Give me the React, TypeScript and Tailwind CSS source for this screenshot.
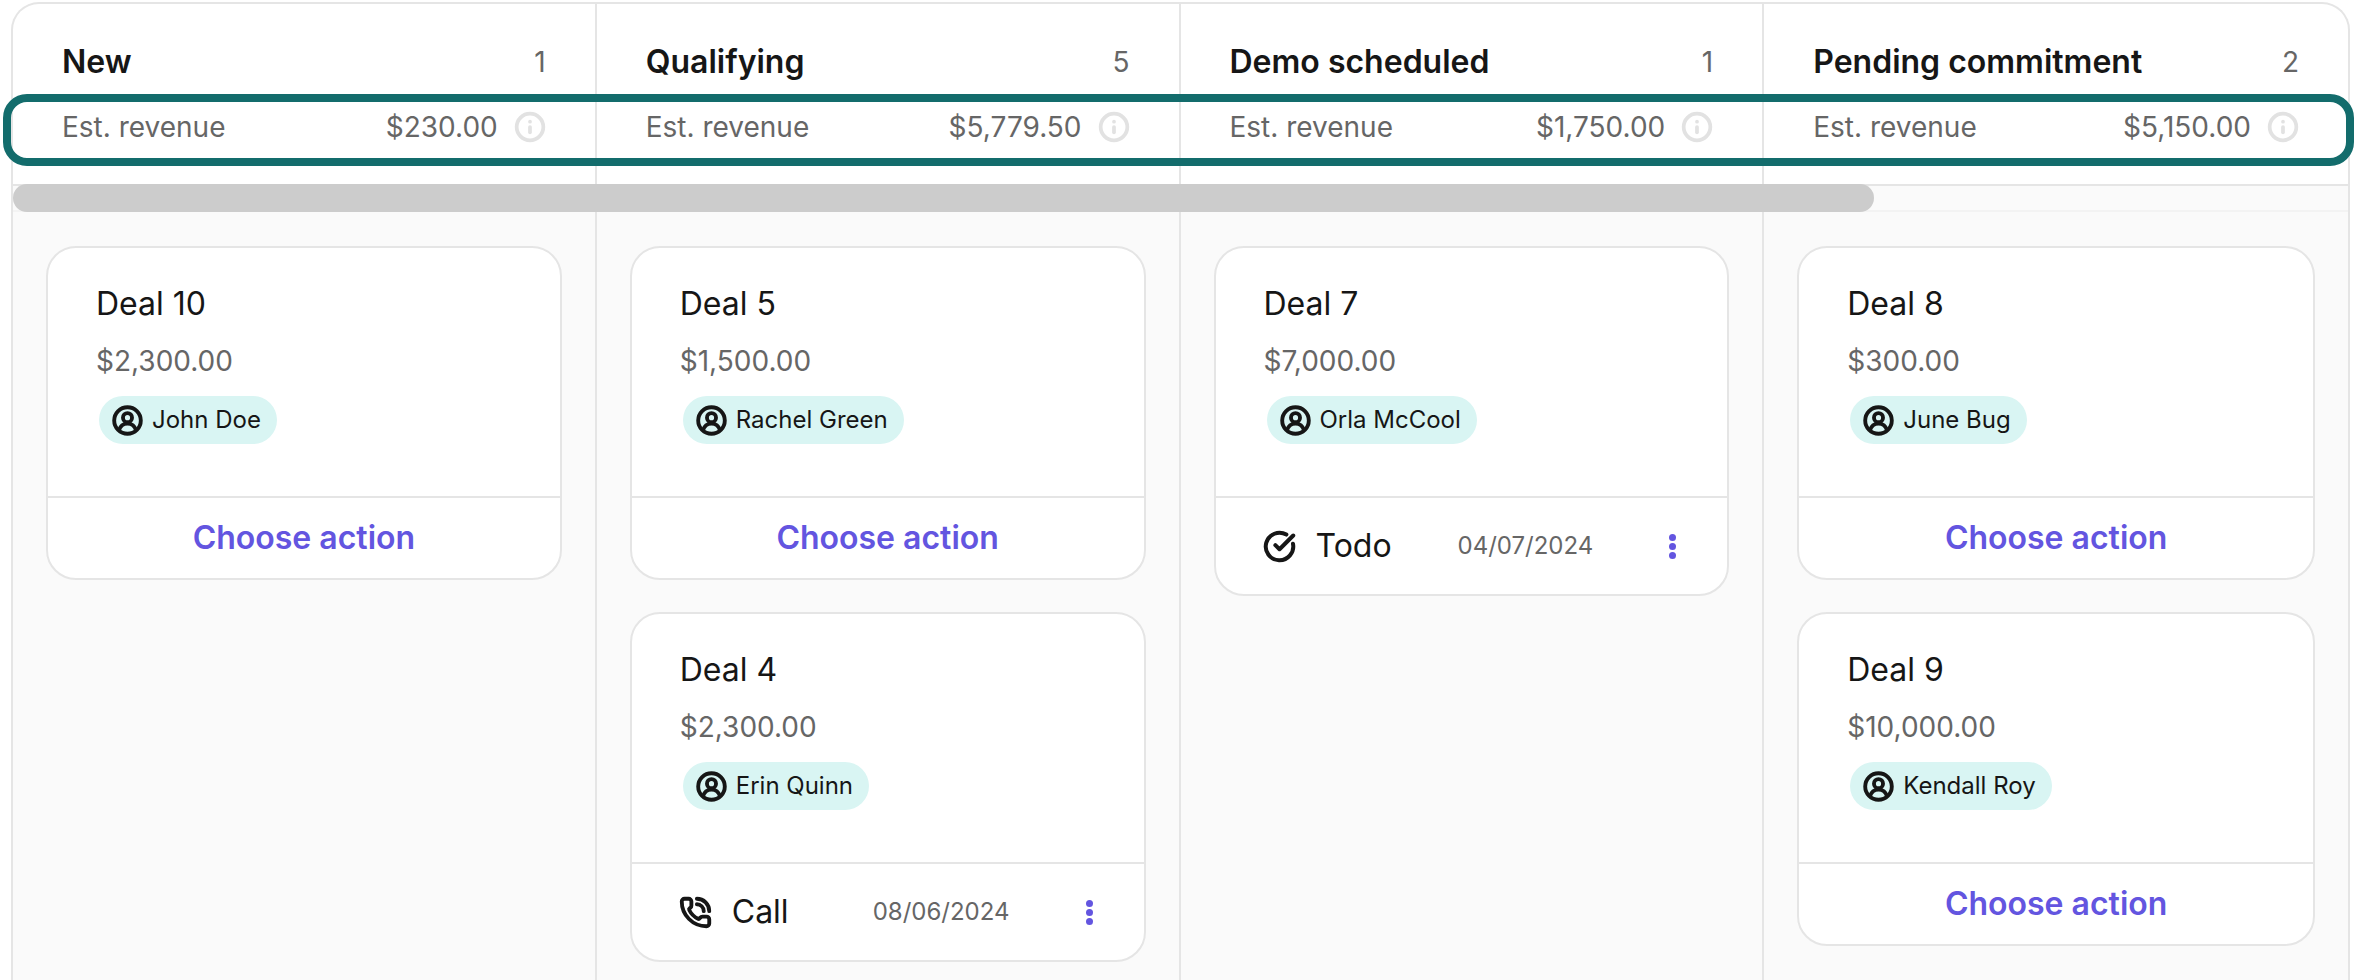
import { PhoneCall, CircleCheckBig, Info } from 'lucide-react';

interface Stage {
  name: string;
  count: number;
  revenue: string;
  deals: Deal[];
}

interface Deal {
  name: string;
  amount: string;
  owner: string;
  activity?: { kind: 'call' | 'todo'; date: string };
}

const stages: Stage[] = [
  {
    name: 'New',
    count: 1,
    revenue: '$230.00',
    deals: [{ name: 'Deal 10', amount: '$2,300.00', owner: 'John Doe' }],
  },
  {
    name: 'Qualifying',
    count: 5,
    revenue: '$5,779.50',
    deals: [
      { name: 'Deal 5', amount: '$1,500.00', owner: 'Rachel Green' },
      { name: 'Deal 4', amount: '$2,300.00', owner: 'Erin Quinn', activity: { kind: 'call', date: '08/06/2024' } },
    ],
  },
  {
    name: 'Demo scheduled',
    count: 1,
    revenue: '$1,750.00',
    deals: [{ name: 'Deal 7', amount: '$7,000.00', owner: 'Orla McCool', activity: { kind: 'todo', date: '04/07/2024' } }],
  },
  {
    name: 'Pending commitment',
    count: 2,
    revenue: '$5,150.00',
    deals: [
      { name: 'Deal 8', amount: '$300.00', owner: 'June Bug' },
      { name: 'Deal 9', amount: '$10,000.00', owner: 'Kendall Roy' },
    ],
  },
];

function UserIcon() {
  return (
    <svg width="31" height="31" viewBox="0 0 24 24" fill="none" stroke="#161616" strokeWidth="3" className="shrink-0">
      <circle cx="12" cy="12" r="10.3" />
      <circle cx="12" cy="9.8" r="3.5" />
      <path d="M5.4 19.6c.9-3 3.4-5.2 6.6-5.2s5.7 2.2 6.6 5.2" />
    </svg>
  );
}

function Dots() {
  return (
    <div className="flex flex-col gap-[2px]">
      <span className="size-[7px] rounded-full bg-[#6355e0]" />
      <span className="size-[7px] rounded-full bg-[#6355e0]" />
      <span className="size-[7px] rounded-full bg-[#6355e0]" />
    </div>
  );
}

function DealCard({ deal }: { deal: Deal }) {
  return (
    <div className="rounded-[30px] border-2 border-[#e5e5e5] bg-white">
      <div className="h-[248px] pl-[48px] pt-[36px]">
        <div className="text-[32px] leading-[40px] text-[#161616]">{deal.name}</div>
        <div className="mt-[17px] text-[28px] leading-[40px] text-[#666666]">{deal.amount}</div>
        <div className="mt-[15px] ml-[3px] inline-flex h-[48px] items-center gap-[9px] rounded-full bg-[#d9f5f3] pl-[13px] pr-[16px] text-[24px] text-[#161616]">
          <UserIcon />
          {deal.owner}
        </div>
      </div>
      {deal.activity ? (
        <div className="flex h-[98px] items-center border-t-2 border-[#e5e5e5] pl-[47px] pr-[51px]">
          {deal.activity.kind === 'call' ? (
            <PhoneCall size={33} strokeWidth={2.8} color="#161616" />
          ) : (
            <CircleCheckBig size={33} strokeWidth={2.9} color="#161616" />
          )}
          <span className="ml-[20px] text-[32px] text-[#161616]">{deal.activity.kind === 'call' ? 'Call' : 'Todo'}</span>
          <span className="ml-auto mr-[76px] text-[24px] text-[#666666]">{deal.activity.date}</span>
          <Dots />
        </div>
      ) : (
        <div className="flex h-[82px] items-center justify-center border-t-2 border-[#e5e5e5] text-[32px] font-semibold text-[#6355e0]">
          Choose action
        </div>
      )}
    </div>
  );
}

export default function App() {
  return (
    <div className="relative h-[980px] w-[2360px] overflow-hidden bg-white pl-[11px] pt-[2px] font-['Inter',sans-serif]">
      <div className="flex h-[978px] w-[2339px] flex-col rounded-t-[28px] border-x-2 border-t-2 border-[#e5e5e5]">
        <div className="grid h-[180px] shrink-0 grid-cols-4">
          {stages.map((stage, i) => (
            <div key={stage.name} className={`pl-[49px] pr-[49px] pt-[38px] ${i < 3 ? 'border-r-2 border-[#e5e5e5]' : ''}`}>
              <div className="flex items-center justify-between leading-[40px]">
                <span className="text-[32px] font-semibold text-[#161616]">{stage.name}</span>
                <span className="text-[28px] text-[#666666]">{stage.count}</span>
              </div>
              <div className="mt-[25px] flex items-center text-[28px] leading-[40px] text-[#666666]">
                <span>Est. revenue</span>
                <span className="ml-auto mr-[16px]">{stage.revenue}</span>
                <Info size={32} strokeWidth={2.8} color="#e2e2e2" />
              </div>
            </div>
          ))}
        </div>
        <div className="h-[28px] shrink-0 border-y-2 border-b-[#f3f3f3] border-t-[#e5e5e5] bg-[#fafafa]">
          <div className="-mt-[2px] h-[28px] w-[1861px] rounded-full bg-[#cccccc]" />
        </div>
        <div className="grid flex-1 grid-cols-4 bg-[#fafafa]">
          {stages.map((stage, i) => (
            <div key={stage.name} className={`flex flex-col gap-[32px] pl-[33px] pr-[33px] pt-[34px] ${i < 3 ? 'border-r-2 border-[#e5e5e5]' : ''}`}>
              {stage.deals.map((deal) => (
                <DealCard key={deal.name} deal={deal} />
              ))}
            </div>
          ))}
        </div>
      </div>
      <div className="absolute left-[3px] top-[94px] h-[72px] w-[2351px] rounded-[24px] border-[8px] border-[#136c6c]" />
    </div>
  );
}
